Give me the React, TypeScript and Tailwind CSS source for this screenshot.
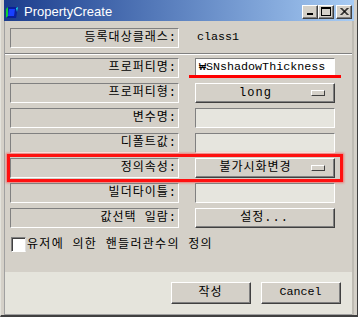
import type { ReactNode } from "react";

const mono = "font-['Liberation_Mono','Noto_Sans_CJK_KR',monospace]";

function LabelBox({ children }: { children: ReactNode }) {
  return (
    <div className="w-[169px] h-[20px] shrink-0 flex items-center justify-end pr-[1px] border border-t-[#808080] border-l-[#808080] border-b-white border-r-white text-[12px] tracking-[1px] text-black">
      {children}
    </div>
  );
}

function Raised({ className, children }: { className: string; children?: ReactNode }) {
  return (
    <div className={"border border-t-white border-l-white border-b-[#404040] border-r-[#404040] " + className}>
      <div className="w-full h-full flex items-center border-b border-r border-b-[#808080] border-r-[#808080]">
        {children}
      </div>
    </div>
  );
}

function Combo({ text }: { text: string }) {
  return (
    <Raised className="w-[140px] h-[20px] bg-[#d4d0c8]">
      <span className="flex-1 text-center text-[12px] tracking-[1px] pl-[4px]">{text}</span>
      <div className="w-[14px] h-[6px] mr-[8px] border border-t-white border-l-white border-b-[#404040] border-r-[#404040] bg-[#d4d0c8]" />
    </Raised>
  );
}

function Field({ children, white }: { children?: ReactNode; white?: boolean }) {
  return (
    <div
      className={
        "w-[140px] h-[20px] flex items-center pl-[3px] border border-t-[#808080] border-l-[#808080] border-b-white border-r-white text-[11.7px] " +
        (white ? "bg-white" : "bg-[#e6e5de]")
      }
    >
      {children}
    </div>
  );
}

function Row({ label, children }: { label: string; children: ReactNode }) {
  return (
    <div className="relative flex items-center gap-[16px] ml-[5px] h-[20px]">
      <LabelBox>{label}</LabelBox>
      {children}
    </div>
  );
}

function TitleButton({ children }: { children: ReactNode }) {
  return (
    <Raised className="w-[16px] h-[14px] bg-[#d4d0c8]">
      <div className="w-full h-full flex items-center justify-center">{children}</div>
    </Raised>
  );
}

export default function App() {
  return (
    <div className={"w-[358px] h-[317px] flex flex-col bg-[#d4d0c8] border-l border-l-[#e4e3dc] border-r border-r-[#404040] border-b-2 border-b-[#404040] overflow-hidden text-black " + mono}>
      <div className="h-[21px] mx-[3px] shrink-0 flex items-end pb-[2px] pl-[1px] pr-[2px] bg-gradient-to-r from-[#1c3c8c] to-[#a8ccf4]">
        <svg width="14" height="13" viewBox="0 0 14 13" className="shrink-0">
          <polygon points="3,1 13,1 11,12 1,12" fill="#0a1f9a" />
          <polygon points="1,3 3,1 3,10 1,12" fill="#10d030" />
          <polygon points="4,3 10,3 9,10 3,10" fill="#1840ff" />
          <polygon points="11,2 13,1 12,6" fill="#20e0e0" />
        </svg>
        <span className="ml-[5px] text-white text-[13px] leading-[15px] font-['Liberation_Sans',sans-serif]">
          PropertyCreate
        </span>
        <div className="flex-1" />
        <div className="flex items-center">
          <TitleButton>
            <svg width="10" height="9" viewBox="0 0 10 9">
              <rect x="2" y="6" width="6" height="2" fill="black" />
            </svg>
          </TitleButton>
          <TitleButton>
            <svg width="10" height="9" viewBox="0 0 10 9">
              <rect x="0.5" y="0.5" width="9" height="8" fill="none" stroke="black" />
              <rect x="0" y="0" width="10" height="2" fill="black" />
            </svg>
          </TitleButton>
          <div className="w-[2px]" />
          <TitleButton>
            <svg width="10" height="9" viewBox="0 0 10 9">
              <path d="M1.5 1 L8.5 8 M2.5 1 L9.5 8 M8.5 1 L1.5 8 M9.5 1 L2.5 8" stroke="black" strokeWidth="1" />
            </svg>
          </TitleButton>
        </div>
      </div>

      <div className="flex-1 flex pl-[3px] pr-[3px]">
        <div className="flex-1 flex flex-col border-l border-l-[#a0a0a0] border-r-2 border-r-[#bebbb3]">
          <div className="h-[251px] shrink-0 bg-[#d4d0c8] flex flex-col pt-[7px]">
            <div className="flex items-center ml-[5px] h-[20px]">
              <LabelBox>등록대상클래스:</LabelBox>
              <span className="ml-[18px] text-[11.7px]">class1</span>
            </div>
            <div className="mt-[5px] h-[2px] border-t border-t-[#808080] border-b border-b-white" />
            <div className="mt-[3px] flex flex-col gap-[5px]">
              <Row label="프로퍼티명:">
                <Field white>₩SNshadowThickness</Field>
                <div className="absolute left-[179px] top-[17px] w-[152px] h-[3px] bg-[#ff0000]" />
              </Row>
              <Row label="프로퍼티형:">
                <Combo text="long" />
              </Row>
              <Row label="변수명:">
                <Field />
              </Row>
              <Row label="디폴트값:">
                <Field />
              </Row>
              <Row label="정의속성:">
                <Combo text="불가시화변경" />
                <div className="absolute -left-[3px] -top-[4px] w-[336px] h-[28px] border-[3px] border-[#ff1010] shadow-[0_0_2px_1px_rgba(255,60,60,0.6)]" />
              </Row>
              <Row label="빌더타이틀:">
                <Field />
              </Row>
              <Row label="값선택 일람:">
                <Raised className="w-[140px] h-[20px] bg-[#d4d0c8]">
                  <span className="flex-1 text-center text-[12px] tracking-[1px]">설정...</span>
                </Raised>
              </Row>
            </div>
            <div className="mt-[9px] ml-[6px] flex items-center h-[15px]">
              <div className="w-[15px] h-[15px] bg-white border border-t-[#808080] border-l-[#808080] border-b-white border-r-[#e0e0e0] shadow-[inset_1px_1px_0_#404040]" />
              <span className="ml-[1px] text-[12px] tracking-[1.3px]">유저에 의한 핸들러관수의 정의</span>
            </div>
          </div>
          <div className="flex-1 bg-[#e5e4dc] flex justify-end gap-[10px] pt-[10px] pr-[11px] border-b border-b-[#a0a0a0]">
            <Raised className="w-[80px] h-[22px] bg-[#d4d0c8]">
              <span className="flex-1 text-center text-[12px] tracking-[1px]">작성</span>
            </Raised>
            <Raised className="w-[80px] h-[22px] bg-[#d4d0c8]">
              <span className="flex-1 text-center text-[11.7px]">Cancel</span>
            </Raised>
          </div>
        </div>
      </div>
    </div>
  );
}
